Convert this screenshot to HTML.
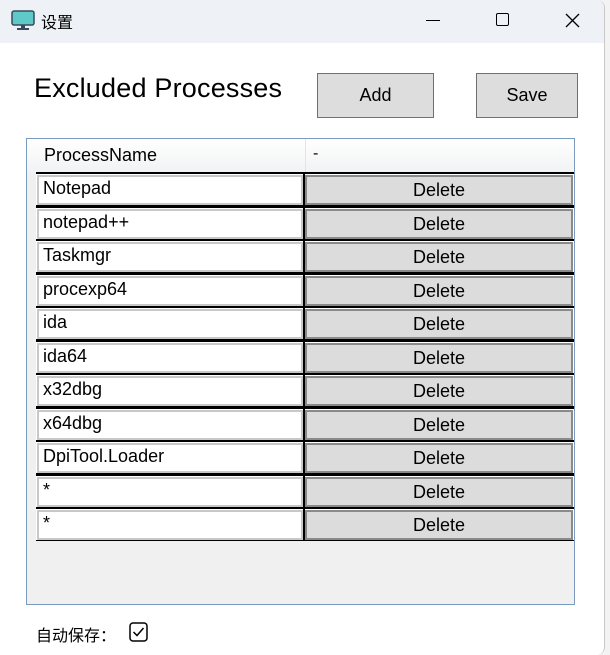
<!DOCTYPE html>
<html><head><meta charset="utf-8"><style>
*{margin:0;padding:0;box-sizing:border-box}
body{width:610px;height:655px;background:#f3f3f3;font-family:"Segoe UI","Liberation Sans","Noto Sans CJK SC",sans-serif;position:relative;overflow:hidden}
.win{position:absolute;left:0;top:0;width:605px;height:655px;background:#fff;border-right:1px solid #c8c8c8;border-radius:0 8px 8px 0}
.tb{position:absolute;left:0;top:0;width:604px;height:43px;background:#eef2f7;border-radius:0 8px 0 0}
.abs{position:absolute}
.btn{position:absolute;background:#dddddd;border:1px solid #707070;font-size:18px;text-align:center;line-height:42px;color:#000}
.grid{position:absolute;left:26px;top:138px;width:549px;height:467px;border:1px solid #7a9ac0;background:#f0f0f0}
.hdr{position:absolute;left:0;top:0;width:547px;height:34px;background:linear-gradient(#fff,#f1f2f4)}
.row{position:absolute;left:9px;width:538px;height:34px;border-top:2px solid #000;border-bottom:1px solid #000;background:#fff}
.t{position:absolute;left:1px;top:1px;width:266px;height:30px;border:2px solid #c8c8c8;background:#fff;font-size:18px;line-height:23px;padding-left:4px;color:#000}
.d{position:absolute;left:269px;top:1px;width:268px;height:30px;border:2px solid #8a8a8a;background:#dcdcdc;font-size:18px;text-align:center;line-height:26px;color:#000}
.sep{position:absolute;left:267px;top:0;width:2px;height:32px;background:#000}
</style></head><body>
<div class="win"></div>
<div class="tb"></div>
<svg class="abs" style="left:11px;top:10px" width="24" height="21" viewBox="0 0 24 21"><rect x="1" y="1" width="22" height="14" rx="2" fill="#5fc9c9" stroke="#3a4a5a" stroke-width="1.5"/><rect x="10" y="15" width="4" height="3" fill="#3a4a5a"/><rect x="6" y="18" width="12" height="2" fill="#3a4a5a"/></svg>
<div class="abs" style="left:41px;top:9px;font-size:16px;font-family:'Noto Sans CJK SC',sans-serif;color:#000">设置</div>
<div class="abs" style="left:426px;top:20px;width:14px;height:1px;background:#000"></div>
<div class="abs" style="left:496px;top:13px;width:13px;height:13px;border:1.5px solid #000;border-radius:2px"></div>
<svg class="abs" style="left:565px;top:13px" width="15" height="15"><path d="M1 1L14 14M14 1L1 14" stroke="#000" stroke-width="1.3"/></svg>
<div class="abs" style="left:34px;top:73px;font-size:27px;color:#000;letter-spacing:0.2px">Excluded Processes</div>
<div class="btn" style="left:317px;top:73px;width:117px;height:45px">Add</div>
<div class="btn" style="left:476px;top:73px;width:102px;height:45px">Save</div>
<div class="grid">
<div class="hdr"><div class="abs" style="left:17px;top:6px;font-size:18px">ProcessName</div><div class="abs" style="left:278px;top:0;width:1px;height:34px;background:#e4e4e4"></div><div class="abs" style="left:286px;top:6px;font-size:16px">-</div></div>
<div class="row" style="top:33px"><div class="t">Notepad</div><div class="sep"></div><div class="d">Delete</div></div>
<div class="row" style="top:66.5px"><div class="t">notepad++</div><div class="sep"></div><div class="d">Delete</div></div>
<div class="row" style="top:100px"><div class="t">Taskmgr</div><div class="sep"></div><div class="d">Delete</div></div>
<div class="row" style="top:133.5px"><div class="t">procexp64</div><div class="sep"></div><div class="d">Delete</div></div>
<div class="row" style="top:167px"><div class="t">ida</div><div class="sep"></div><div class="d">Delete</div></div>
<div class="row" style="top:200.5px"><div class="t">ida64</div><div class="sep"></div><div class="d">Delete</div></div>
<div class="row" style="top:234px"><div class="t">x32dbg</div><div class="sep"></div><div class="d">Delete</div></div>
<div class="row" style="top:267.5px"><div class="t">x64dbg</div><div class="sep"></div><div class="d">Delete</div></div>
<div class="row" style="top:301px"><div class="t">DpiTool.Loader</div><div class="sep"></div><div class="d">Delete</div></div>
<div class="row" style="top:334.5px"><div class="t">*</div><div class="sep"></div><div class="d">Delete</div></div>
<div class="row" style="top:368px"><div class="t">*</div><div class="sep"></div><div class="d">Delete</div></div>
</div>
<div class="abs" style="left:36px;top:622px;font-size:16px;font-family:'Noto Sans CJK SC',sans-serif;color:#000">自动保存：</div>
<svg class="abs" style="left:129px;top:622px" width="20" height="20"><rect x="1" y="1" width="17" height="18" rx="3" fill="#fff" stroke="#000" stroke-width="1.5"/><path d="M4.5 10L8 13.5L14.5 6" fill="none" stroke="#000" stroke-width="1.5"/></svg>
</body></html>
